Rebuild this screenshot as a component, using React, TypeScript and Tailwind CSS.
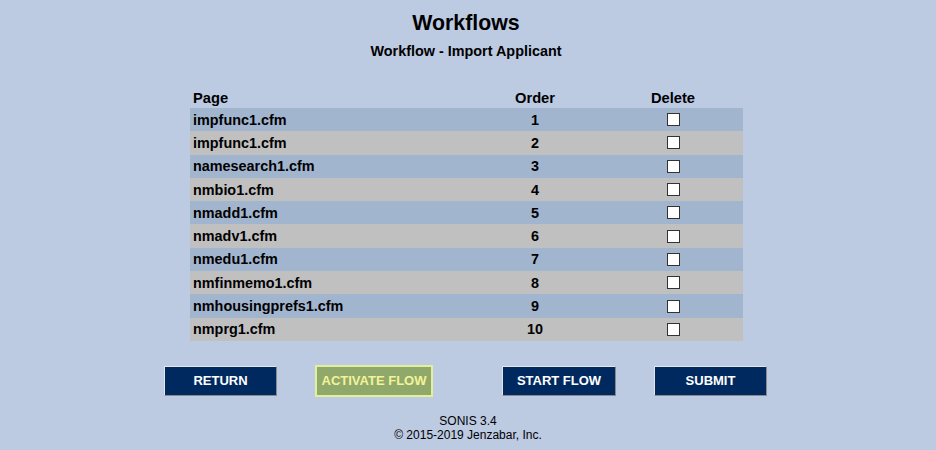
const pages = [
  'impfunc1.cfm',
  'impfunc1.cfm',
  'namesearch1.cfm',
  'nmbio1.cfm',
  'nmadd1.cfm',
  'nmadv1.cfm',
  'nmedu1.cfm',
  'nmfinmemo1.cfm',
  'nmhousingprefs1.cfm',
  'nmprg1.cfm',
];

function NavyButton({ label, className = '' }: { label: string; className?: string }) {
  return (
    <button
      className={`h-[30px] border border-t-[#e6e6e6] border-l-[#e6e6e6] border-b-[#8a8a8a] border-r-[#8a8a8a] bg-[#002a5f] text-[13px] font-bold text-white ${className}`}
    >
      {label}
    </button>
  );
}

export default function App() {
  return (
    <div className="min-h-screen w-full bg-[#bccae2] text-black [font-family:'Liberation_Sans',Arial,sans-serif]">
      <div className="w-[932px] pt-[11px] text-center">
        <h1 className="text-[21.3px] font-bold leading-[24px]">Workflows</h1>
        <h2 className="mt-[8px] text-[14.4px] font-bold leading-[16px]">Workflow - Import Applicant</h2>
      </div>

      <div className="ml-[190px] mt-[29px] w-[553px] text-[14.4px] font-bold leading-[16px]">
        <div className="grid h-[20px] grid-cols-[277px_136px_140px] items-center text-[14.7px]">
          <div className="pl-[3px]">Page</div>
          <div className="text-center">Order</div>
          <div className="text-center">Delete</div>
        </div>
        {pages.map((page, i) => (
          <div
            key={i}
            className={`grid h-[23.3px] grid-cols-[277px_136px_140px] items-center ${
              i % 2 === 0 ? 'bg-[#a2b5cf]' : 'bg-[#c0c0c0]'
            }`}
          >
            <div className="pl-[3px]">{page}</div>
            <div className="text-center">{i + 1}</div>
            <div className="flex justify-center">
              <input
                type="checkbox"
                className="h-[13px] w-[13px] appearance-none border border-[#333] bg-white"
              />
            </div>
          </div>
        ))}
      </div>

      <div className="mt-[24px] flex h-[32px] items-center pl-[164px]">
        <NavyButton label="RETURN" className="w-[113px]" />
        <button className="ml-[38px] h-[32px] w-[118px] border-2 border-[#e2ef9b] bg-[#90a96b] text-[13px] font-bold text-[#f3f39a]">
          ACTIVATE FLOW
        </button>
        <NavyButton label="START FLOW" className="ml-[69px] w-[114px]" />
        <NavyButton label="SUBMIT" className="ml-[38px] w-[113px]" />
      </div>

      <div className="mt-[17px] text-center text-[12px] leading-[14px]">
        <div>SONIS 3.4</div>
        <div>© 2015-2019 Jenzabar, Inc.</div>
      </div>
    </div>
  );
}
